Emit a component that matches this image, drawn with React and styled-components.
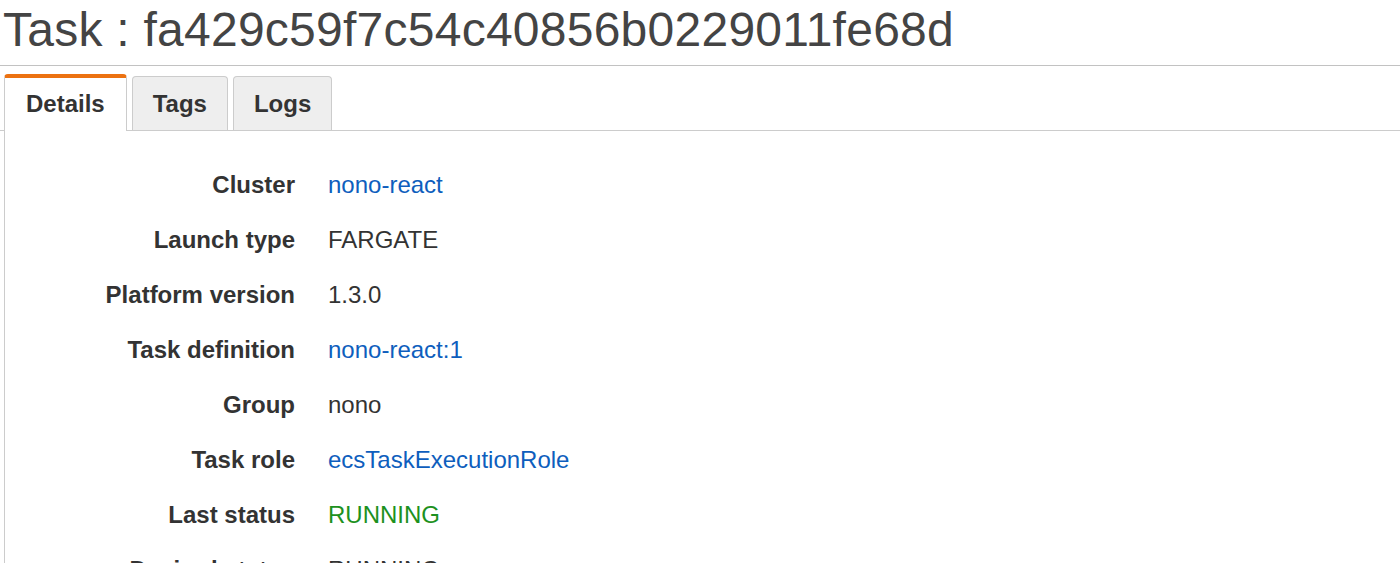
import React from 'react'
import { createGlobalStyle, styled } from 'styled-components'

const GlobalStyle = createGlobalStyle`
  html, body {
    margin: 0;
    padding: 0;
    background: #fff;
    overflow: hidden;
  }
  body {
    font-family: "Liberation Sans", Arial, Helvetica, sans-serif;
    color: #333;
  }
`

const rows = [
  { label: 'Cluster', value: 'nono-react', kind: 'link' },
  { label: 'Launch type', value: 'FARGATE' },
  { label: 'Platform version', value: '1.3.0' },
  { label: 'Task definition', value: 'nono-react:1', kind: 'link' },
  { label: 'Group', value: 'nono' },
  { label: 'Task role', value: 'ecsTaskExecutionRole', kind: 'link' },
  { label: 'Last status', value: 'RUNNING', kind: 'ok' },
  { label: 'Desired status', value: 'RUNNING' },
]

const tabs = ['Details', 'Tags', 'Logs']

export default function App() {
  return (
    <>
      <GlobalStyle />
      <Page>
        <Title>Task : fa429c59f7c54c40856b0229011fe68d</Title>
        <TabBar>
          {tabs.map((t, i) => (
            <Tab key={t} $active={i === 0}>{t}</Tab>
          ))}
        </TabBar>
        <Panel>
          <DetailList>
            {rows.map((r) => (
              <React.Fragment key={r.label}>
                <Label>{r.label}</Label>
                <Value $kind={r.kind}>{r.value}</Value>
              </React.Fragment>
            ))}
          </DetailList>
        </Panel>
      </Page>
    </>
  )
}

const Page = styled('div')`
  width: 1400px;
  height: 563px;
  overflow: hidden;
`

const Title = styled('h1')`
  margin: 0;
  padding: 6px 0 11px 3px;
  font-size: 48px;
  line-height: 48px;
  font-weight: 400;
  letter-spacing: 0.25px;
  color: #444;
  border-bottom: 1px solid #c2c2c2;
  white-space: nowrap;
`

const TabBar = styled('div')`
  display: flex;
  align-items: flex-end;
  gap: 5px;
  padding: 8px 0 0 4px;
  border-bottom: 1px solid #cccccc;
`

const Tab = styled('div')`
  font-size: 24px;
  line-height: 24px;
  font-weight: 700;
  color: #333;
  padding: ${(p) => (p.$active ? '14px 21px 15px' : '15px 20px 14px')};
  background: ${(p) => (p.$active ? '#fff' : '#eeeeee')};
  border: 1px solid #cccccc;
  border-bottom: none;
  border-top: ${(p) => (p.$active ? '4px solid #ec7211' : '1px solid #cccccc')};
  border-radius: 4px 4px 0 0;
  margin-bottom: ${(p) => (p.$active ? '-1px' : '0')};
  position: relative;
`

const Panel = styled('div')`
  margin-left: 4px;
  border-left: 1px solid #cccccc;
  padding-top: 42px;
  height: 600px;
`

const DetailList = styled('div')`
  display: grid;
  grid-template-columns: 290px 1fr;
  column-gap: 33px;
  row-gap: 31px;
  font-size: 24px;
  line-height: 24px;
`

const Label = styled('div')`
  text-align: right;
  font-weight: 700;
  color: #333;
`

const Value = styled('div')`
  color: ${(p) =>
    p.$kind === 'link' ? '#0e5ebd' : p.$kind === 'ok' ? '#1d9120' : '#333'};
`
